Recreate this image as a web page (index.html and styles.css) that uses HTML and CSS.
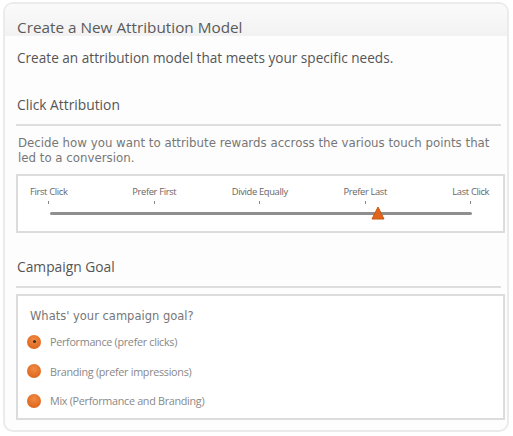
FILE: index.html
```html
<!DOCTYPE html>
<html>
<head>
<meta charset="utf-8">
<link rel="stylesheet" href="styles.css">
</head>
<body>
<div class="card">
  <div class="card-head">Create a New Attribution Model</div>
  <div class="card-body">
    <p class="intro">Create an attribution model that meets your specific needs.</p>

    <h2 class="section-title">Click Attribution</h2>
    <div class="rule"></div>
    <p class="desc">Decide how you want to attribute rewards accross the various touch points that led to a conversion.</p>
    <div class="panel slider-panel">
      <div class="stops">
        <div class="stop"><span class="stop-label">First Click</span><span class="tick"></span></div>
        <div class="stop"><span class="stop-label">Prefer First</span><span class="tick"></span></div>
        <div class="stop"><span class="stop-label">Divide Equally</span><span class="tick"></span></div>
        <div class="stop"><span class="stop-label">Prefer Last</span><span class="tick"></span></div>
        <div class="stop"><span class="stop-label">Last Click</span><span class="tick"></span></div>
      </div>
      <div class="track">
        <svg class="thumb" width="14" height="14" viewBox="0 0 14 14"><path d="M7 1 L13 13 L1 13 Z" fill="#e1661c" stroke="#c9560f" stroke-width="1" stroke-linejoin="round"/></svg>
      </div>
    </div>

    <h2 class="section-title goal-title">Campaign Goal</h2>
    <div class="rule"></div>
    <div class="panel goal-panel">
      <p class="question">Whats' your campaign goal?</p>
      <label class="option"><span class="radio checked"></span>Performance (prefer clicks)</label>
      <label class="option"><span class="radio"></span>Branding (prefer impressions)</label>
      <label class="option"><span class="radio"></span>Mix (Performance and Branding)</label>
    </div>
  </div>
</div>
</body>
</html>
```

FILE: styles.css
```css
html, body {
  margin: 0;
  padding: 0;
  background: #ffffff;
}
body {
  padding: 2px 4px 4px 3px;
  font-family: "Open Sans", "Noto Sans", sans-serif;
  color: #555;
}
.card {
  border: 2px solid #ebebeb;
  border-radius: 10px;
  background: #fdfdfd;
  height: 430px;
  box-sizing: border-box;
  overflow: hidden;
}
.card-head {
  height: 32px;
  padding: 13px 0 0 12px;
  box-sizing: border-box;
  background: linear-gradient(#fafafa, #f2f2f2);
  font-size: 15.3px;
  color: #5a5a5a;
  line-height: 20px;
}
.card-body {
  padding: 0 6px 0 10px;
}
.intro {
  margin: 12px 0 0 2px;
  font-size: 13.6px;
  line-height: 20px;
  color: #555;
}
.section-title {
  margin: 27px 0 0 2px;
  font-weight: normal;
  font-size: 13.8px;
  line-height: 20px;
  color: #555;
}
.goal-title {
  margin-top: 24px;
}
.rule {
  height: 2px;
  background: #dedede;
  margin: 9px 0 0 1px;
}
.desc {
  margin: 10px 0 0 3px;
  font-family: "DejaVu Sans", sans-serif;
  font-size: 11.8px;
  line-height: 15px;
  color: #777;
}
.panel {
  border: 2px solid #dcdcdc;
  background: #fff;
  margin-left: 1px;
  margin-right: -4px;
}
.slider-panel {
  margin-top: 8px;
  height: 59px;
  box-sizing: border-box;
  padding: 10px 0 0 0;
}
.stops {
  display: grid;
  grid-template-columns: repeat(5, 105.5px);
  margin-left: -22px;
}
.stop {
  display: flex;
  flex-direction: column;
  align-items: center;
}
.stop-label {
  font-size: 9.4px;
  line-height: 12px;
  letter-spacing: -0.35px;
  color: #666;
}
.tick {
  width: 1px;
  height: 3px;
  background: #888;
  margin-top: 3px;
}
.track {
  position: relative;
  height: 3px;
  background: #8f8f8f;
  margin: 8px 0 0 32px;
  width: 422px;
  border-radius: 2px;
}
.thumb {
  position: absolute;
  left: 321px;
  top: -6px;
}
.goal-panel {
  margin-top: 6px;
  height: 126px;
  box-sizing: border-box;
  padding: 12px 0 0 12px;
}
.question {
  margin: 0 0 3px 0;
  font-family: "DejaVu Sans", sans-serif;
  font-size: 11.5px;
  line-height: 16px;
  color: #777;
}
.option {
  display: flex;
  align-items: center;
  gap: 9px;
  height: 29.5px;
  margin-left: -3px;
  font-size: 10.8px;
  letter-spacing: -0.3px;
  color: #888;
}
.radio {
  width: 14px;
  height: 14px;
  border-radius: 50%;
  background: radial-gradient(circle at 50% 35%, #f28a45, #df6a1f 70%, #c95a14);
  display: flex;
  align-items: center;
  justify-content: center;
  flex: none;
}
.radio.checked::after {
  content: "";
  width: 3px;
  height: 3px;
  border-radius: 50%;
  background: #333;
}
```
